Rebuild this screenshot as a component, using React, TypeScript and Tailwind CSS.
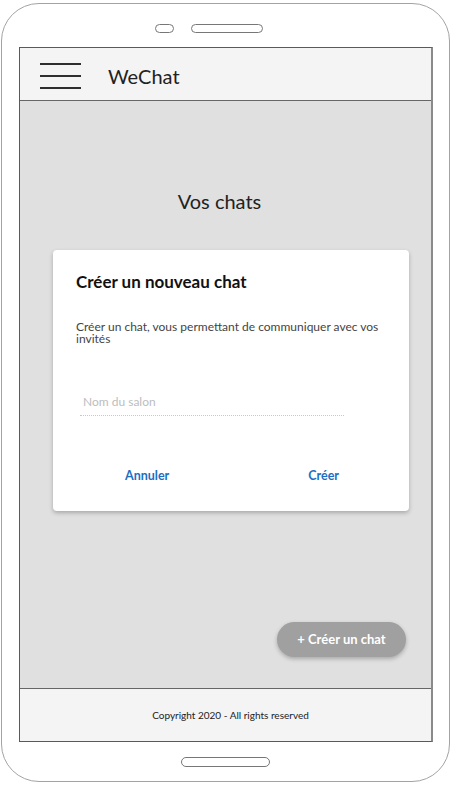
import React from 'react'

const font = { fontFamily: 'Lato, "Open Sans", sans-serif' }

function Hamburger() {
  return (
    <div className="flex flex-col gap-[10px] w-[41px]">
      <span className="block h-[2px] bg-[#2e2e2e]" />
      <span className="block h-[2px] bg-[#2e2e2e]" />
      <span className="block h-[2px] bg-[#2e2e2e]" />
    </div>
  )
}

function NewChatDialog() {
  return (
    <div className="ml-[33px] w-[356px] h-[261px] bg-white rounded-[4px] shadow-[0_2px_4px_rgba(0,0,0,0.25)] flex flex-col">
      <h2 className="pl-[23px] pt-[21px] text-[17px] leading-[22px] font-bold text-[#111]">
        Créer un nouveau chat
      </h2>

      <p className="pl-[23px] pr-[16px] mt-[28px] text-[12px] leading-[12px] text-[#444]">
        Créer un chat, vous permettant de communiquer avec vos invités
      </p>

      {/* Champ nom du salon */}
      <div className="ml-[27px] mt-[43px] w-[264px] h-[28px] border-b border-dotted border-[#c8c8c8] flex items-center pl-[3px]">
        <span className="text-[12px] text-[#bdbdbd]">Nom du salon</span>
      </div>

      <div className="mt-[52px] flex justify-between pl-[72px] pr-[70px]">
        <span className="text-[12.5px] leading-[16px] font-bold text-[#1b6ec2]">Annuler</span>
        <span className="text-[12.5px] leading-[16px] font-bold text-[#1b6ec2]">Créer</span>
      </div>
    </div>
  )
}

export default function App() {
  return (
    <div className="w-[452px] h-[785px] bg-white pt-[3px] pl-[1px]" style={font}>
      <div className="w-[449px] h-[779px] border border-[#a3a3a3] rounded-[38px] flex flex-col">
        {/* Speaker */}
        <div className="pt-[20px] flex items-center gap-[17px] pl-[153px]">
          <span className="block w-[19px] h-[9px] rounded-full border border-[#777]" />
          <span className="block w-[72px] h-[9px] rounded-full border border-[#777]" />
        </div>

        {/* Screen */}
        <div className="mt-[14px] ml-[17px] w-[414px] h-[695px] border border-[#5a5a5a] border-r-2 border-r-[#8a8a8a] flex flex-col bg-[#e0e0e0]">
          <header className="h-[53px] pt-[3px] bg-[#f4f4f4] border-b border-[#666] flex items-center pl-[20px] gap-[27px] shrink-0">
            <Hamburger />
            <span className="text-[20px] text-[#222]">WeChat</span>
          </header>

          <main className="flex-1 flex flex-col">
            <h1 className="pt-[88px] text-center pr-[12px] text-[20px] leading-[24px] text-[#222]">
              Vos chats
            </h1>
            <div className="mt-[37px]">
              <NewChatDialog />
            </div>
            <div className="mt-auto mb-[31px] flex justify-end pr-[25px]">
              <button className="w-[129px] h-[35px] rounded-full bg-[#a0a0a0] text-white text-[13px] font-bold shadow-[0_2px_4px_rgba(0,0,0,0.25)]">
                + Créer un chat
              </button>
            </div>
          </main>

          <footer className="h-[53px] bg-[#f4f4f4] border-t border-[#666] flex items-center justify-center shrink-0">
            <span className="text-[10px] text-[#222] pl-[10px]">Copyright 2020 - All rights reserved</span>
          </footer>
        </div>

        {/* Home button */}
        <div className="mt-[15px] pl-[179px]">
          <span className="block w-[89px] h-[10px] rounded-full border border-[#777]" />
        </div>
      </div>
    </div>
  )
}
